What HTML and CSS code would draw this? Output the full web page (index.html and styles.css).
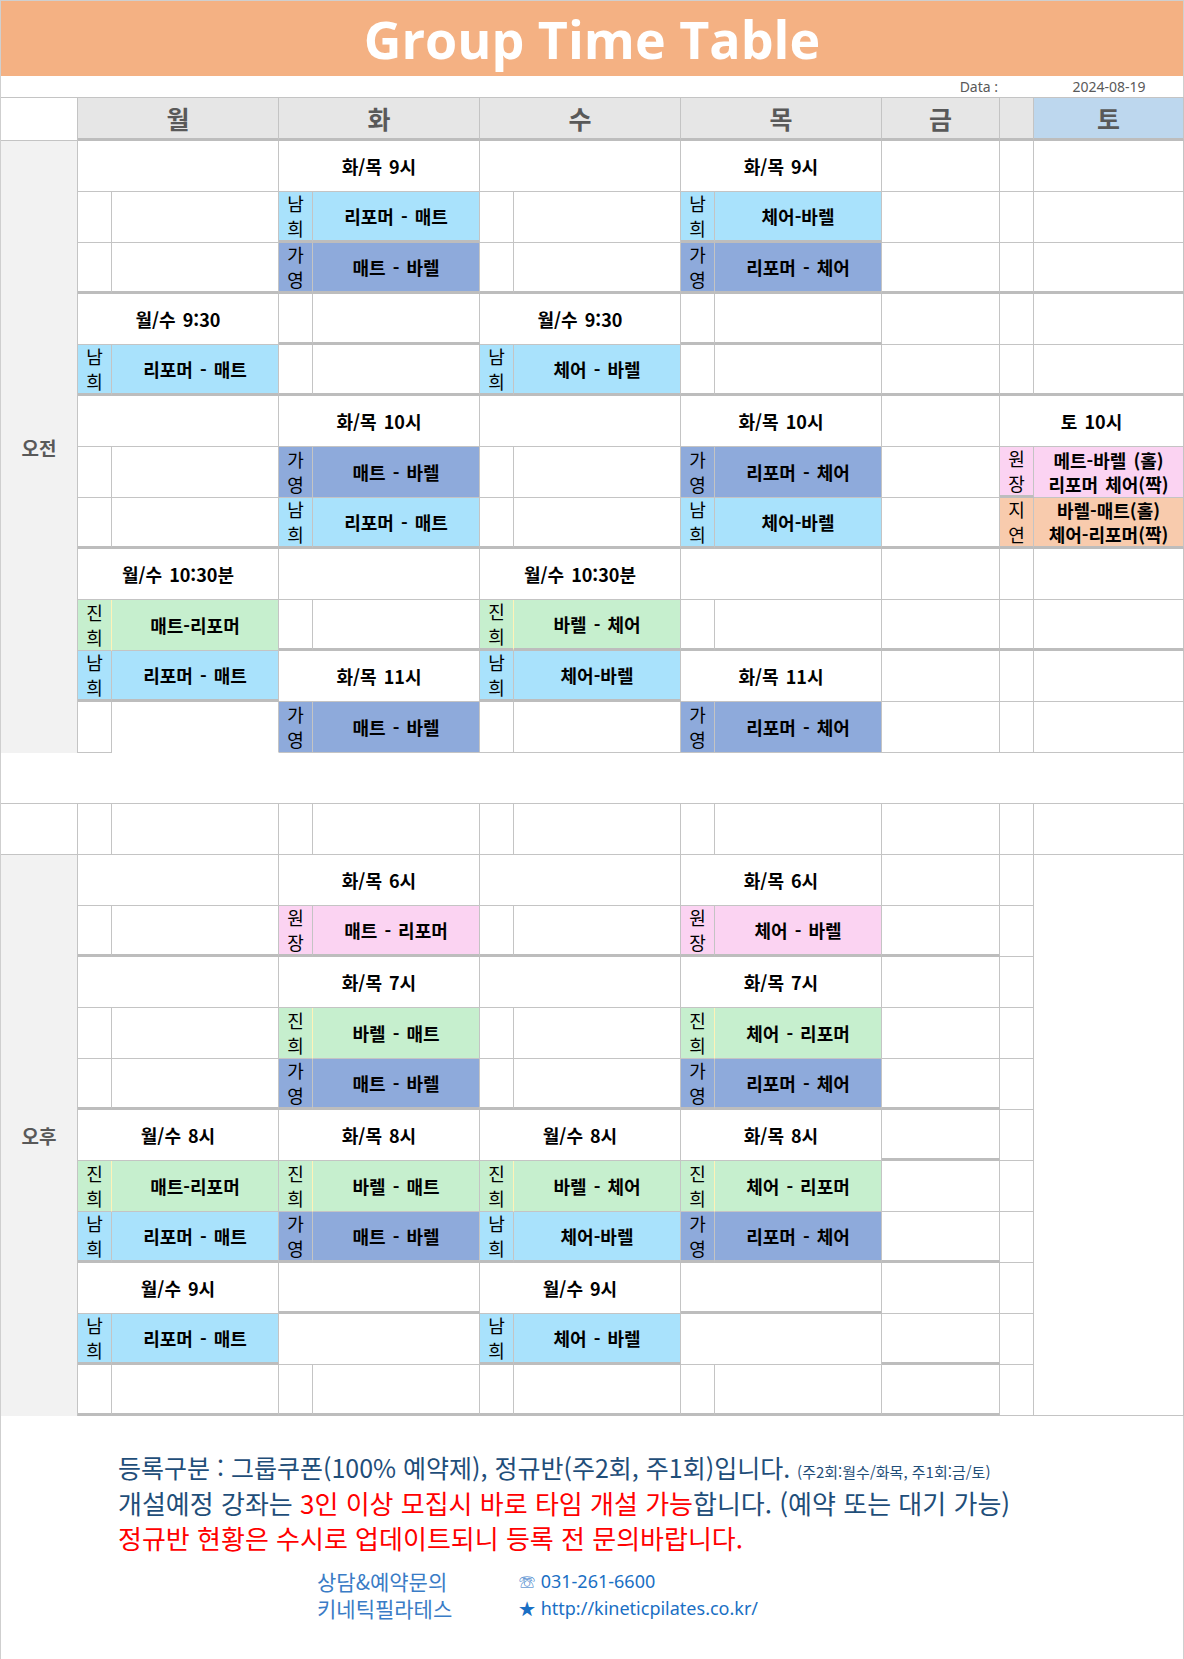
FILE: index.html
```html
<!DOCTYPE html>
<html lang="ko">
<head>
    <meta charset="UTF-8">
    <title>Group Time Table</title>
    <link rel="stylesheet" href="styles.css">
</head>
<body>
    <div class="sheet">
        <div class="title">Group Time Table</div>

        <div class="dateline">
            <div class="date-label">Data :</div>
            <div class="date-value">2024-08-19</div>
        </div>

        <div class="grid">
            <!-- header -->
            <div class="c hc0"></div>
            <div class="c hd s2">월</div>
            <div class="c hd s2">화</div>
            <div class="c hd s2">수</div>
            <div class="c hd s2">목</div>
            <div class="c hd">금</div>
            <div class="c hd"></div>
            <div class="c hd sat">토</div>

            <!-- 오전 r1 -->
            <div class="side am">오전</div>
            <div class="c s2"></div>
            <div class="c s2">화/목 9시</div>
            <div class="c s2"></div>
            <div class="c s2">화/목 9시</div>
            <div class="c"></div>
            <div class="c"></div>
            <div class="c"></div>
            <!-- r2 -->
            <div class="c"></div><div class="c"></div>
            <div class="c lb blue tk"><span>남<br>희</span></div><div class="c blue tk">리포머 - 매트</div>
            <div class="c"></div><div class="c"></div>
            <div class="c lb blue tk"><span>남<br>희</span></div><div class="c blue tk">체어-바렐</div>
            <div class="c"></div><div class="c"></div><div class="c"></div>
            <!-- r3 -->
            <div class="c tk"></div><div class="c tk"></div>
            <div class="c lb peri tk"><span>가<br>영</span></div><div class="c peri tk">매트 - 바렐</div>
            <div class="c tk"></div><div class="c tk"></div>
            <div class="c lb peri tk"><span>가<br>영</span></div><div class="c peri tk">리포머 - 체어</div>
            <div class="c tk"></div><div class="c tk"></div><div class="c tk"></div>
            <!-- r4 -->
            <div class="c s2">월/수 9:30</div>
            <div class="c tk"></div><div class="c tk"></div>
            <div class="c s2">월/수 9:30</div>
            <div class="c tk"></div><div class="c tk"></div>
            <div class="c"></div><div class="c"></div><div class="c"></div>
            <!-- r5 -->
            <div class="c lb blue tk"><span>남<br>희</span></div><div class="c blue tk">리포머 - 매트</div>
            <div class="c tk"></div><div class="c tk"></div>
            <div class="c lb blue tk"><span>남<br>희</span></div><div class="c blue tk">체어 - 바렐</div>
            <div class="c tk"></div><div class="c tk"></div>
            <div class="c tk"></div><div class="c tk"></div><div class="c tk"></div>
            <!-- r6 -->
            <div class="c s2"></div>
            <div class="c s2">화/목 10시</div>
            <div class="c s2"></div>
            <div class="c s2">화/목 10시</div>
            <div class="c"></div>
            <div class="c s2">토 10시</div>
            <!-- r7 -->
            <div class="c"></div><div class="c"></div>
            <div class="c lb peri"><span>가<br>영</span></div><div class="c peri">매트 - 바렐</div>
            <div class="c"></div><div class="c"></div>
            <div class="c lb peri"><span>가<br>영</span></div><div class="c peri">리포머 - 체어</div>
            <div class="c"></div>
            <div class="c lb pink tk"><span>원<br>장</span></div><div class="c pink"><span>메트-바렐 (홀)<br>리포머 체어(짝)</span></div>
            <!-- r8 -->
            <div class="c tk"></div><div class="c tk"></div>
            <div class="c lb blue tk"><span>남<br>희</span></div><div class="c blue tk">리포머 - 매트</div>
            <div class="c tk"></div><div class="c tk"></div>
            <div class="c lb blue tk"><span>남<br>희</span></div><div class="c blue tk">체어-바렐</div>
            <div class="c tk"></div>
            <div class="c lb peach tk"><span>지<br>연</span></div><div class="c peach tk"><span>바렐-매트(홀)<br>체어-리포머(짝)</span></div>
            <!-- r9 -->
            <div class="c s2">월/수 10:30분</div>
            <div class="c s2"></div>
            <div class="c s2">월/수 10:30분</div>
            <div class="c s2"></div>
            <div class="c"></div><div class="c"></div><div class="c"></div>
            <!-- r10 -->
            <div class="c lb green"><span>진<br>희</span></div><div class="c green">매트-리포머</div>
            <div class="c tk"></div><div class="c tk"></div>
            <div class="c lb green tk"><span>진<br>희</span></div><div class="c green tk">바렐 - 체어</div>
            <div class="c tk"></div><div class="c tk"></div>
            <div class="c tk"></div><div class="c tk"></div><div class="c tk"></div>
            <!-- r11 -->
            <div class="c lb blue tk"><span>남<br>희</span></div><div class="c blue tk">리포머 - 매트</div>
            <div class="c s2">화/목 11시</div>
            <div class="c lb blue tk"><span>남<br>희</span></div><div class="c blue tk">체어-바렐</div>
            <div class="c s2">화/목 11시</div>
            <div class="c"></div><div class="c"></div><div class="c"></div>
            <!-- r12 -->
            <div class="c"></div><div class="c nb"></div>
            <div class="c lb peri"><span>가<br>영</span></div><div class="c peri">매트 - 바렐</div>
            <div class="c"></div><div class="c"></div>
            <div class="c lb peri"><span>가<br>영</span></div><div class="c peri">리포머 - 체어</div>
            <div class="c"></div><div class="c"></div><div class="c"></div>

            <!-- gap -->
            <div class="gap"></div>

            <!-- empty row -->
            <div class="c"></div>
            <div class="c"></div><div class="c"></div>
            <div class="c"></div><div class="c"></div>
            <div class="c"></div><div class="c"></div>
            <div class="c"></div><div class="c"></div>
            <div class="c"></div><div class="c"></div><div class="c"></div>

            <!-- 오후 a1 -->
            <div class="side pm">오후</div>
            <div class="c s2"></div>
            <div class="c s2">화/목 6시</div>
            <div class="c s2"></div>
            <div class="c s2">화/목 6시</div>
            <div class="c"></div>
            <div class="c"></div>
            <div class="c satpm"></div>
            <!-- a2 -->
            <div class="c tk"></div><div class="c tk"></div>
            <div class="c lb pink tk"><span>원<br>장</span></div><div class="c pink tk">매트 - 리포머</div>
            <div class="c tk"></div><div class="c tk"></div>
            <div class="c lb pink tk"><span>원<br>장</span></div><div class="c pink tk">체어 - 바렐</div>
            <div class="c tk"></div><div class="c"></div>
            <!-- a3 -->
            <div class="c s2"></div>
            <div class="c s2">화/목 7시</div>
            <div class="c s2"></div>
            <div class="c s2">화/목 7시</div>
            <div class="c"></div><div class="c"></div>
            <!-- a4 -->
            <div class="c"></div><div class="c"></div>
            <div class="c lb green"><span>진<br>희</span></div><div class="c green">바렐 - 매트</div>
            <div class="c"></div><div class="c"></div>
            <div class="c lb green"><span>진<br>희</span></div><div class="c green">체어 - 리포머</div>
            <div class="c"></div><div class="c"></div>
            <!-- a5 -->
            <div class="c tk"></div><div class="c tk"></div>
            <div class="c lb peri tk"><span>가<br>영</span></div><div class="c peri tk">매트 - 바렐</div>
            <div class="c tk"></div><div class="c tk"></div>
            <div class="c lb peri tk"><span>가<br>영</span></div><div class="c peri tk">리포머 - 체어</div>
            <div class="c tk"></div><div class="c"></div>
            <!-- a6 -->
            <div class="c s2">월/수 8시</div>
            <div class="c s2">화/목 8시</div>
            <div class="c s2">월/수 8시</div>
            <div class="c s2">화/목 8시</div>
            <div class="c tk"></div><div class="c"></div>
            <!-- a7 -->
            <div class="c lb green"><span>진<br>희</span></div><div class="c green">매트-리포머</div>
            <div class="c lb green"><span>진<br>희</span></div><div class="c green">바렐 - 매트</div>
            <div class="c lb green"><span>진<br>희</span></div><div class="c green">바렐 - 체어</div>
            <div class="c lb green"><span>진<br>희</span></div><div class="c green">체어 - 리포머</div>
            <div class="c"></div><div class="c"></div>
            <!-- a8 -->
            <div class="c lb blue tk"><span>남<br>희</span></div><div class="c blue tk">리포머 - 매트</div>
            <div class="c lb peri tk"><span>가<br>영</span></div><div class="c peri tk">매트 - 바렐</div>
            <div class="c lb blue tk"><span>남<br>희</span></div><div class="c blue tk">체어-바렐</div>
            <div class="c lb peri tk"><span>가<br>영</span></div><div class="c peri tk">리포머 - 체어</div>
            <div class="c tk"></div><div class="c"></div>
            <!-- a9 -->
            <div class="c s2">월/수 9시</div>
            <div class="c s2 tk"></div>
            <div class="c s2">월/수 9시</div>
            <div class="c s2 tk"></div>
            <div class="c"></div><div class="c"></div>
            <!-- a10 -->
            <div class="c lb blue tk"><span>남<br>희</span></div><div class="c blue tk">리포머 - 매트</div>
            <div class="c s2"></div>
            <div class="c lb blue tk"><span>남<br>희</span></div><div class="c blue tk">체어 - 바렐</div>
            <div class="c s2"></div>
            <div class="c tk"></div><div class="c"></div>
            <!-- a11 -->
            <div class="c tk"></div><div class="c tk"></div>
            <div class="c tk"></div><div class="c tk"></div>
            <div class="c tk"></div><div class="c tk"></div>
            <div class="c tk"></div><div class="c tk"></div>
            <div class="c tk"></div><div class="c"></div>
        </div>

        <div class="notice">
            <p class="first">등록구분 : 그룹쿠폰(100% 예약제), 정규반(주2회, 주1회)입니다. <small>(주2회:월수/화목, 주1회:금/토)</small></p>
            <p>개설예정 강좌는 <span class="red">3인 이상 모집시 바로 타임 개설 가능</span>합니다. (예약 또는 대기 가능)</p>
            <p class="red">정규반 현황은 수시로 업데이트되니 등록 전 문의바랍니다.</p>
            <div class="contact">
                <span>상담&amp;예약문의</span><span class="link">☏ 031-261-6600</span>
                <span>키네틱필라테스</span><span class="link">★ http://kineticpilates.co.kr/</span>
            </div>
        </div>
    </div>
</body>
</html>
```

FILE: styles.css
```css
* {
    box-sizing: border-box;
}
body {
    margin: 0;
    background-color: #fff;
    font-family: "Noto Sans CJK KR", "Noto Sans", sans-serif;
}
.sheet {
    width: 1184px;
    min-height: 1659px;
    border: 1px solid #cfcfcf;
    border-bottom: none;
}
.title {
    height: 75px;
    background-color: #f4b183;
    color: #fff;
    font-family: "Open Sans", "Noto Sans", sans-serif;
    font-weight: 700;
    font-size: 52px;
    line-height: 75px;
    text-align: center;
}
.dateline,
.grid {
    display: grid;
    grid-template-columns: 77px 34px 167px 34px 167px 34px 167px 34px 167px 118px 34px 150px;
    width: 1183px;
    margin-right: -1px;
}
.dateline {
    height: 22px;
    border-bottom: 1px solid #c4c4c4;
    font-family: "Noto Sans", sans-serif;
    font-size: 14px;
    line-height: 21px;
    color: #595959;
}
.date-label {
    grid-column: 10;
    text-align: right;
    padding-right: 2px;
}
.date-value {
    grid-column: 12;
    text-align: center;
}
.grid {
    grid-template-rows: 43px;
    grid-auto-rows: 51px;
}
.c {
    display: flex;
    align-items: center;
    justify-content: center;
    border-right: 1px solid #c4c4c4;
    border-bottom: 1px solid #c4c4c4;
    font-size: 18px;
    font-weight: 700;
    line-height: 24px;
    word-spacing: 2px;
    color: #000;
    text-align: center;
    white-space: nowrap;
}
.s2 {
    grid-column: span 2;
}
.tk {
    border-bottom: 3px solid #bdbdbd;
}
.nb {
    border-bottom-color: transparent;
}
.hc0 {
    background-color: #fff;
}
.hd {
    background-color: #e6e6e6;
    border-bottom: 3px solid #bdbdbd;
    color: #595959;
    font-size: 25px;
}
.sat {
    background-color: #bdd7ee;
}
.side {
    display: flex;
    align-items: center;
    justify-content: center;
    background-color: #f2f2f2;
    border-right: 1px solid #c4c4c4;
    color: #595959;
    font-size: 19px;
    font-weight: 700;
}
.am {
    grid-row: span 12;
}
.pm {
    grid-row: span 11;
}
.satpm {
    grid-row: span 11;
}
.gap {
    grid-column: 1 / -1;
    border-bottom: 1px solid #c4c4c4;
}
.lb {
    font-weight: 400;
    line-height: 25px;
}
.blue {
    background-color: #a9e2fc;
}
.peri {
    background-color: #8eaadb;
}
.green {
    background-color: #c6efce;
}
.green.lb {
    border-right-color: #fff2b8;
}
.pink {
    background-color: #fbd3f2;
}
.peach {
    background-color: #f8cbad;
}
.notice {
    padding: 34px 0 0 117px;
    font-size: 26px;
    line-height: 35px;
    color: #1f4e79;
}
.notice p {
    margin: 0;
}
.notice .first {
    font-size: 25px;
}
.notice small {
    font-size: 15px;
    line-height: 1;
}
.red {
    color: #ff0000;
}
.contact {
    display: grid;
    grid-template-columns: 201px auto;
    margin: 13px 0 0 199px;
    font-size: 21px;
    line-height: 27px;
    color: #3a7cc6;
}
.link {
    font-family: "Noto Sans", sans-serif;
    font-size: 18px;
    color: #1a6fc4;
}
```
